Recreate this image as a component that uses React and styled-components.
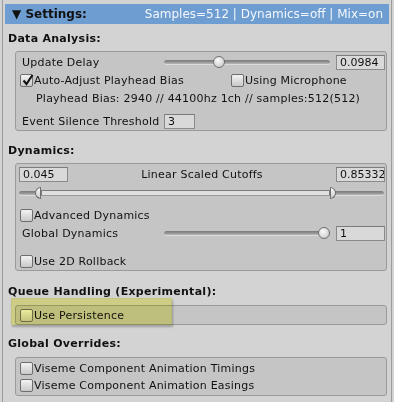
import React from "react";
import styled, { createGlobalStyle } from "styled-components";

const GlobalStyle = createGlobalStyle`
  html, body { margin: 0; padding: 0; background: #d3d3d3; }
  body {
    font-family: "DejaVu Sans", Verdana, sans-serif;
    font-size: 11px;
    color: #111;
  }
  * { box-sizing: border-box; }
`;

const Page = styled.div`
  width: 394px;
  height: 402px;
  overflow: hidden;
  background: #d3d3d3;
`;

const Frame = styled.div`
  margin: 0 2px;
  height: 100%;
  border-left: 1px solid #9c9c9c;
  border-right: 1px solid #9c9c9c;
  padding: 4px 2px 0;
`;

const Header = styled.div`
  height: 20px;
  background: #6e9dd2;
  display: flex;
  align-items: center;
  justify-content: space-between;
  padding: 0 6px 0 7px;
  font-size: 12px;
`;

const HeaderTitle = styled.span`
  font-weight: bold;
  color: #111;
  white-space: nowrap;
`;

const HeaderInfo = styled.span`
  color: #f4f7fb;
  white-space: nowrap;
`;

const Section = styled.div`
  position: relative;
  margin-top: ${(p) => p.$top}px;
`;

const Heading = styled.div`
  height: 14px;
  line-height: 14px;
  padding-left: 3px;
  font-weight: bold;
  letter-spacing: 0.28px;
  white-space: nowrap;
`;

const Box = styled.div`
  margin: ${(p) => p.$gap}px 2px 0 10px;
  border: 1px solid #9a9a9a;
  border-radius: 3px;
  background: #c5c5c5;
  padding: ${(p) => p.$pad || "0"};
  letter-spacing: 0.22px;
`;

const Row = styled.div`
  display: flex;
  align-items: center;
  height: ${(p) => p.$h || 18}px;
  margin-top: ${(p) => p.$mt || 0}px;
  padding: 0 1px 0 ${(p) => (p.$indent !== undefined ? p.$indent : 6)}px;
  white-space: nowrap;
`;

const Label = styled.span`
  width: ${(p) => p.$w || 142}px;
  flex: none;
`;

const Cell = styled.div`
  display: flex;
  align-items: center;
  width: ${(p) => p.$w}px;
  flex: none;
`;

const Field = styled.div`
  width: ${(p) => p.$w || 49}px;
  height: 15px;
  flex: none;
  margin-left: ${(p) => p.$ml || 0}px;
  background: #d9d9d9;
  border: 1px solid #8a8a8a;
  border-top-color: #7a7a7a;
  padding: 0 2px 0 3px;
  line-height: 13px;
  letter-spacing: 0;
  overflow: hidden;
`;

const CenterText = styled.div`
  flex: 1;
  text-align: center;
`;

const Box13 = styled.span`
  width: 13px;
  height: 13px;
  flex: none;
  border: 1px solid #6e6e6e;
  border-radius: 2px;
  background: linear-gradient(#f3f3f3, #c9c9c9);
  position: relative;
  margin-right: 1px;
`;

const CheckMark = styled.svg`
  position: absolute;
  left: 0px;
  top: -2px;
`;

const Check = ({ checked, children }) => (
  <>
    <Box13>
      {checked && (
        <CheckMark width="14" height="14" viewBox="0 0 14 14">
          <path d="M2.5 7.5 L5.5 11 L11.5 2" fill="none" stroke="#141414" strokeWidth="2.2" />
        </CheckMark>
      )}
    </Box13>
    <span>{children}</span>
  </>
);

const SliderWrap = styled.div`
  position: relative;
  flex: 1;
  height: 14px;
  display: flex;
  align-items: center;
`;

const Track = styled.div`
  width: 100%;
  height: 5px;
  border-radius: 3px;
  background: linear-gradient(#7b7b7b 0%, #8f8f8f 45%, #b9b9b9 100%);
  border-bottom: 1px solid #dcdcdc;
`;

const Thumb = styled.div`
  position: absolute;
  top: 1px;
  width: 12px;
  height: 12px;
  border-radius: 50%;
  border: 1px solid #6f6f6f;
  background: radial-gradient(circle at 40% 35%, #fbfbfb, #d2d2d2 70%, #bdbdbd);
`;

const Slider = ({ value }) => (
  <SliderWrap>
    <Track />
    <Thumb style={{ left: `calc(${value} * (100% - 12px))` }} />
  </SliderWrap>
);

const Range = styled.div`
  position: absolute;
  top: 4px;
  height: 6px;
  background: #e0e0e0;
  border: 1px solid #7c7c7c;
  border-bottom-color: #9a9a9a;
`;

const HalfThumb = styled.div`
  position: absolute;
  top: 1px;
  width: 6px;
  height: 12px;
  border: 1px solid #6f6f6f;
  background: linear-gradient(#fafafa, #cdcdcd);
  border-radius: ${(p) => (p.$side === "left" ? "6px 0 0 6px" : "0 6px 6px 0")};
`;

const MinMaxSlider = ({ min, max }) => (
  <SliderWrap>
    <Track />
    <Range style={{ left: `calc(${min} * 100% + 6px)`, width: `calc(${max - min} * 100% - 6px)` }} />
    <HalfThumb $side="left" style={{ left: `calc(${min} * 100%)` }} />
    <HalfThumb $side="right" style={{ left: `calc(${max} * 100%)` }} />
  </SliderWrap>
);

const EndPad = styled.div`
  width: 1px;
  flex: none;
`;

const Highlight = styled.div`
  position: absolute;
  left: 6px;
  top: 13px;
  width: 161px;
  height: 27px;
  background: rgb(248, 248, 162);
  mix-blend-mode: multiply;
  border: 1px solid rgb(238, 238, 156);
  box-shadow: 1px 2px 2px rgba(0, 0, 0, 0.25);
  pointer-events: none;
`;

export default function App() {
  return (
    <Page>
      <GlobalStyle />
      <Frame>
        <Header>
          <HeaderTitle>▼ Settings:</HeaderTitle>
          <HeaderInfo>Samples=512 | Dynamics=off | Mix=on</HeaderInfo>
        </Header>

        <Section $top={8}>
          <Heading>Data Analysis:</Heading>
          <Box $gap={5} $pad="1px 0 0">
            <Row>
              <Label>Update Delay</Label>
              <Slider value={0.32} />
              <Field $ml={6}>0.0984</Field>
            </Row>
            <Row $indent={4}>
              <Cell $w={211}>
                <Check checked>Auto-Adjust Playhead Bias</Check>
              </Cell>
              <Check>Using Microphone</Check>
            </Row>
            <Row $indent={20}>Playhead Bias: 2940 // 44100hz 1ch // samples:512(512)</Row>
            <Row $mt={5}>
              <Label>Event Silence Threshold</Label>
              <Field $w={31}>3</Field>
            </Row>
          </Box>
        </Section>

        <Section $top={13}>
          <Heading>Dynamics:</Heading>
          <Box $gap={5} $pad="1px 0 0">
            <Row $indent={3}>
              <Field>0.045</Field>
              <CenterText>Linear Scaled Cutoffs</CenterText>
              <Field>0.85332</Field>
            </Row>
            <Row $indent={3} $mt={1}>
              <MinMaxSlider min={0.045} max={0.85332} />
              <EndPad />
            </Row>
            <Row $indent={4} $mt={4}>
              <Check>Advanced Dynamics</Check>
            </Row>
            <Row>
              <Label>Global Dynamics</Label>
              <Slider value={1} />
              <Field $ml={6}>1</Field>
            </Row>
            <Row $indent={4} $mt={10}>
              <Check>Use 2D Rollback</Check>
            </Row>
          </Box>
        </Section>

        <Section $top={14}>
          <Heading>Queue Handling (Experimental):</Heading>
          <Box $gap={6}>
            <Row $indent={4}>
              <Check>Use Persistence</Check>
            </Row>
          </Box>
          <Highlight />
        </Section>

        <Section $top={12}>
          <Heading>Global Overrides:</Heading>
          <Box $gap={6} $pad="2px 0 1px">
            <Row $indent={4} $h={17}>
              <Check>Viseme Component Animation Timings</Check>
            </Row>
            <Row $indent={4} $h={17}>
              <Check>Viseme Component Animation Easings</Check>
            </Row>
          </Box>
        </Section>
      </Frame>
    </Page>
  );
}
